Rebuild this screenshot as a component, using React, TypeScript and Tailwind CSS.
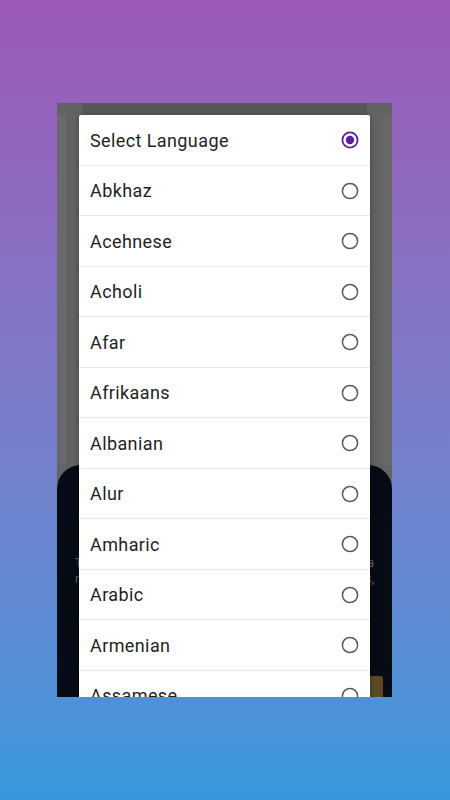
import React from "react";

const languages = [
  "Abkhaz",
  "Acehnese",
  "Acholi",
  "Afar",
  "Afrikaans",
  "Albanian",
  "Alur",
  "Amharic",
  "Arabic",
  "Armenian",
  "Assamese",
];

const Radio = ({ checked }: { checked?: boolean }) =>
  checked ? (
    <svg width="18" height="18" viewBox="0 0 18 18">
      <circle cx="9" cy="9" r="7.6" fill="none" stroke="#5b1f9b" strokeWidth="1.8" />
      <circle cx="9" cy="9" r="4.2" fill="#5b1f9b" />
    </svg>
  ) : (
    <svg width="18" height="18" viewBox="0 0 18 18">
      <circle cx="9" cy="9" r="7.6" fill="none" stroke="#5a5a5a" strokeWidth="1.5" />
    </svg>
  );

export default function App() {
  return (
    <div className="w-[450px] h-[800px] bg-gradient-to-b from-[#9c59b7] to-[#3598dc] pt-[103px] font-['Roboto',sans-serif]">
      {/* phone screenshot */}
      <div className="relative ml-[57px] w-[335px] h-[594px] overflow-hidden bg-[#636363] flex flex-col">
        <div className="h-[12px] bg-[#575757] mx-[25px]" />
        <div className="flex-1 flex">
          <div className="w-[9px] bg-[#6a6a6a]" />
          <div className="flex-1" />
          <div className="w-[9px] bg-[#686868]" />
        </div>
        {/* dark sheet behind dialog */}
        <div className="h-[232px] bg-[#050c16] rounded-t-[24px] flex flex-col pt-[90px] px-[9px]">
          <div className="px-[9px] text-[12px] leading-[16px] text-[#5f6670] [text-align-last:justify] text-justify">
            <p>This application translates your text into a</p>
            <p>required language with synonyms and examples,</p>
          </div>
          <div className="mt-auto self-end w-[60px] h-[21px] rounded-t-[3px] bg-[#5c4b22]" />
        </div>

        {/* dialog */}
        <div className="absolute left-[22px] top-[12px] w-[291px] bg-white shadow-[0_2px_6px_rgba(0,0,0,0.35)] rounded-[2px]">
          <div className="h-[50.5px] flex items-center justify-between pl-[11px] pr-[11px] pt-[1px] border-b border-[#e6e6e6]">
            <span className="text-[18px] text-[#1f1f1f] tracking-[0.4px]">Select Language</span>
            <Radio checked />
          </div>
          {languages.map((l) => (
            <div
              key={l}
              className="h-[50.5px] flex items-center justify-between pl-[11px] pr-[11px] pt-[1px] border-b border-[#e6e6e6]"
            >
              <span className="text-[18px] text-[#1f1f1f] tracking-[0.4px]">{l}</span>
              <Radio />
            </div>
          ))}
        </div>
      </div>
    </div>
  );
}
